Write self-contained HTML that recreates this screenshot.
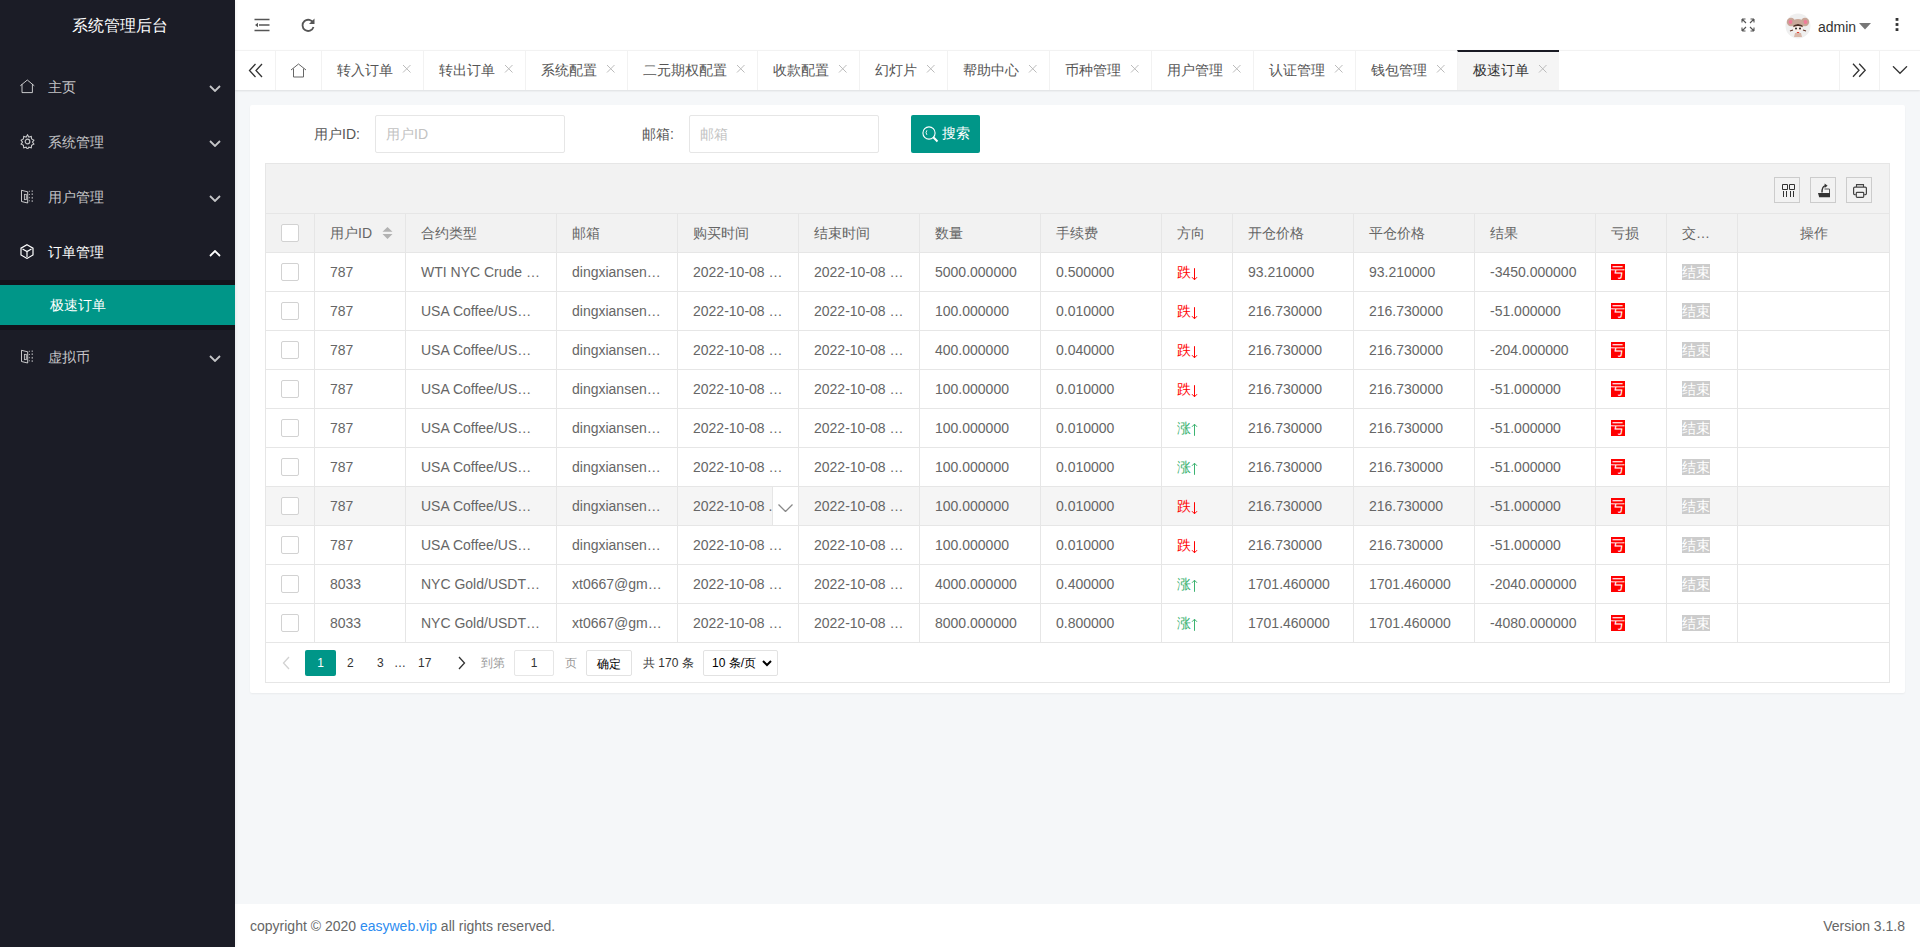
<!DOCTYPE html><html><head><meta charset="utf-8"><style>*{margin:0;padding:0;box-sizing:border-box}
html,body{width:1920px;height:947px;overflow:hidden;background:#f5f7f9;font-family:"Liberation Sans",sans-serif;font-size:14px;color:#666}
svg{display:block}
#side{position:absolute;left:0;top:0;width:235px;height:947px;background:#1b1c26;box-shadow:1px 0 3px rgba(0,0,0,.06);z-index:2}
#logo{position:absolute;left:2px;top:1px;width:235px;height:50px;line-height:50px;text-align:center;color:#fff;font-size:16px}
.nav{position:absolute;left:0;width:235px;height:55px;line-height:55px;color:rgba(255,255,255,.75);font-size:14px}
.nav.act{color:#fff}
.nav .t{position:absolute;left:48px;top:0}
.nav .ic{position:absolute;left:20px;top:19px}
.nav .ar{position:absolute;left:209px;top:25px}
#sub{position:absolute;left:0;top:280px;width:235px;height:50px;background:#13141b}
#sub .it{position:absolute;left:0;top:5px;width:235px;height:40px;line-height:40px;background:#009688;color:#fff;padding-left:50px}
#head{position:absolute;left:235px;top:0;width:1685px;height:50px;background:#fff}
.hic{position:absolute}
.avatar{position:absolute;left:1550px;top:13px;width:26px;height:26px}
.admin{position:absolute;left:1583px;top:2px;line-height:50px;color:#333;font-size:14px}
#tabs{position:absolute;left:235px;top:50px;width:1685px;height:40px;background:#fff;border-top:1px solid #f2f2f2;box-shadow:0 1px 2px rgba(0,0,0,.1)}
.tbtn{position:absolute;top:-1px;height:40px;display:flex;align-items:center;justify-content:center}
.tab{position:absolute;top:-1px;height:40px;border-left:1px solid #f2f2f2;color:#555;font-size:14px}
.tab.home{display:flex;align-items:center;justify-content:center}
.tab .tt{position:absolute;left:15px;top:0;line-height:40px;white-space:nowrap}
.tab .x{position:absolute;right:12px;top:14px}
.tab.act{background:#f5f5f5;color:#333;border-top:2px solid #191a23}
.tab.act .tt{top:-2px}
.tab.act .x{top:12px}
#card{position:absolute;left:250px;top:105px;width:1655px;height:588px;background:#fff;border-radius:2px;box-shadow:0 1px 2px rgba(0,0,0,.05)}
.lbl{position:absolute;line-height:38px;color:#555;font-size:14px}
.inp{position:absolute;top:10px;width:190px;height:38px;border:1px solid #e6e6e6;border-radius:2px;padding-left:10px;line-height:36px;color:#c2c2c2}
.btn{position:absolute;left:661px;top:10px;width:69px;height:38px;background:#009688;border-radius:2px;color:#fff;display:flex;align-items:center;padding-left:11px}
.btn span{margin-left:3px}
#tbl{position:absolute;left:265px;top:163px;width:1625px;height:520px;border:1px solid #e6e6e6;background:#fff}
#tool{position:absolute;left:0;top:0;width:1623px;height:50px;background:#f2f2f2;border-bottom:1px solid #e6e6e6}
.tool{position:absolute;top:13px;margin-left:-1px;width:26px;height:26px;border:1px solid #ccc}
.hrow{position:absolute;left:0;top:50px;width:1623px;height:39px;background:#f2f2f2;border-bottom:1px solid #e6e6e6}
.row{position:absolute;left:0;width:1623px;height:39px;border-bottom:1px solid #e6e6e6;background:#fff}
.row.hov{background:#f5f5f5}
.c{position:absolute;top:0;height:38px;line-height:38px;padding-left:15px;border-left:1px solid #e6e6e6;white-space:nowrap;overflow:hidden;color:#666}
.hrow .c{height:38px;line-height:38px}
.c:first-child{border-left:none}
.c.ctr{text-align:center;padding-left:0}
.cb{position:absolute;left:16px;top:10px;width:18px;height:18px;border:1px solid #d2d2d2;border-radius:2px;background:#fff}
.sort{position:absolute;left:67px;top:12px}
.dn{color:#f00}
.arr{position:absolute;left:29px;top:14px}
.up{color:#3cb371}
.kui{display:inline-block;background:#f00;color:#fff;font-size:14px;line-height:16px;vertical-align:middle;position:relative;top:-1px}
.end{display:inline-block;background:#ccc;color:#fff;font-size:14px;line-height:16px;vertical-align:middle;position:relative;top:-1px}
.tips{position:absolute;top:0;width:26px;height:38px;background:#fff;border-left:1px solid #e6e6e6}
#page{position:absolute;left:0;top:479px;width:1623px;height:40px}
.pg{position:absolute;top:7px;height:26px;line-height:26px;color:#333;font-size:12px}
.pg.prev{left:16px;top:13px}
.pg.cur{left:39px;width:31px;background:#009688;color:#fff;text-align:center;border-radius:2px}
.pg.next{left:192px;top:13px}
.ptxt{position:absolute;top:7px;line-height:26px;font-size:12px}
.pinp{position:absolute;left:248px;top:7px;width:40px;height:26px;border:1px solid #e6e6e6;border-radius:2px;text-align:center;line-height:24px;font-size:12px;color:#333}
.pbtn{position:absolute;left:320px;top:7px;width:46px;height:26px;border:1px solid #e2e2e2;border-radius:2px;text-align:center;line-height:26px;font-size:12px;color:#000}
.psel{position:absolute;left:437px;top:7px;width:75px;height:26px;border:1px solid #e2e2e2;border-radius:2px;line-height:24px;font-size:12px;color:#000;padding-left:8px}
.psel .chev{position:absolute;right:5px;top:9px}
#foot{position:absolute;left:235px;top:904px;width:1685px;height:43px;background:#fff;line-height:45px;font-size:14px;color:#666;padding-left:15px}
#foot .lnk{color:#2d8cf0}
#foot .v{position:absolute;right:15px;top:0;line-height:45px}
</style></head><body>
<div id="side"><div id="logo">系统管理后台</div>
<div class="nav" style="top:60px"><span class="ic ic-home"><svg width="15" height="15" viewBox="0 0 15 15" ><path d="M0.3 6.8L7.3 1 14.3 6.8M2 5.3v8.3h10.4V5.3" fill="none" stroke="currentColor" stroke-width="1"/></svg></span><span class="t">主页</span><span class="ar"><svg width="12" height="7" viewBox="0 0 12 7" ><path d="M1 1l5 5 5-5" fill="none" stroke="currentColor" stroke-width="1.8"/></svg></span></div>
<div class="nav" style="top:115px"><span class="ic ic-gear"><svg width="15" height="15" viewBox="0 0 15 15" ><circle cx="7.5" cy="7.5" r="2.3" fill="none" stroke="currentColor" stroke-width="1.2"/><path d="M7.5 0.8l1.3 2.2 2.5-.6.3 2.5 2.3 1.2-1.4 2 1.4 2-2.3 1.2-.3 2.5-2.5-.6-1.3 2.2-1.3-2.2-2.5.6-.3-2.5-2.3-1.2 1.4-2-1.4-2 2.3-1.2.3-2.5 2.5.6z" fill="none" stroke="currentColor" stroke-width="1.1"/></svg></span><span class="t">系统管理</span><span class="ar"><svg width="12" height="7" viewBox="0 0 12 7" ><path d="M1 1l5 5 5-5" fill="none" stroke="currentColor" stroke-width="1.8"/></svg></span></div>
<div class="nav" style="top:170px"><span class="ic ic-book"><svg width="15" height="15" viewBox="0 0 15 15" ><path d="M1.5 1.3L7.7 2.8V14L1.5 12.5z" fill="none" stroke="currentColor" stroke-width="1"/><rect x="4.4" y="5.4" width="1.9" height="5.2" fill="none" stroke="currentColor" stroke-width="0.9"/><path d="M9.3 1.8v1M9.3 5v1M9.3 8.2v1M9.3 11.3v1M12.2 1.5v1.4M12.2 4.4v1.6M12.2 7.9v1.8M12.2 11.3v1.6" stroke="currentColor" stroke-width="1"/></svg></span><span class="t">用户管理</span><span class="ar"><svg width="12" height="7" viewBox="0 0 12 7" ><path d="M1 1l5 5 5-5" fill="none" stroke="currentColor" stroke-width="1.8"/></svg></span></div>
<div class="nav act" style="top:225px"><span class="ic ic-cube"><svg width="15" height="15" viewBox="0 0 15 15" ><path d="M7 0.8l6 3.4v6.8l-6 3.4-6-3.4V4.2z M2.5 5l4.5 2.6 4.5-2.6 M7 7.6v5.4" fill="none" stroke="currentColor" stroke-width="1.2"/></svg></span><span class="t">订单管理</span><span class="ar"><svg width="12" height="7" viewBox="0 0 12 7" ><path d="M1 6l5-5 5 5" fill="none" stroke="currentColor" stroke-width="1.8"/></svg></span></div>
<div class="nav" style="top:330px"><span class="ic ic-book"><svg width="15" height="15" viewBox="0 0 15 15" ><path d="M1.5 1.3L7.7 2.8V14L1.5 12.5z" fill="none" stroke="currentColor" stroke-width="1"/><rect x="4.4" y="5.4" width="1.9" height="5.2" fill="none" stroke="currentColor" stroke-width="0.9"/><path d="M9.3 1.8v1M9.3 5v1M9.3 8.2v1M9.3 11.3v1M12.2 1.5v1.4M12.2 4.4v1.6M12.2 7.9v1.8M12.2 11.3v1.6" stroke="currentColor" stroke-width="1"/></svg></span><span class="t">虚拟币</span><span class="ar"><svg width="12" height="7" viewBox="0 0 12 7" ><path d="M1 1l5 5 5-5" fill="none" stroke="currentColor" stroke-width="1.8"/></svg></span></div>
<div id="sub"><div class="it">极速订单</div></div>
</div>
<div id="head">
<span class="hic" style="left:19px;top:18px"><svg width="16" height="14" viewBox="0 0 16 14" ><path d="M0.5 1.5h15M5 7h10.5M0.5 12.5h15" stroke="#555" stroke-width="1.5"/><path d="M1 7l3-2.2v4.4z" fill="#555"/></svg></span>
<span class="hic" style="left:65px;top:17px"><svg width="16" height="16" viewBox="0 0 16 16" ><path d="M13.3 6.2A5.6 5.6 0 1 0 13.5 10" fill="none" stroke="#555" stroke-width="1.8"/><path d="M14.5 1.5v5.5H9z" fill="#555"/></svg></span>
<span class="hic" style="left:1506px;top:18px"><svg width="14" height="14" viewBox="0 0 14 14" ><path d="M1 1l4 4M1 1v3.5M1 1h3.5 M13 1l-4 4M13 1v3.5M13 1H9.5 M1 13l4-4M1 13V9.5M1 13h3.5 M13 13l-4-4M13 13V9.5M13 13H9.5" fill="none" stroke="#555" stroke-width="1.1"/></svg></span>
<span class="avatar"><svg width="26" height="26" viewBox="0 0 26 26" ><circle cx="13" cy="13" r="12.5" fill="#efefef"/><circle cx="6" cy="9" r="4.2" fill="#c8a597"/><circle cx="20" cy="9" r="4.2" fill="#c8a597"/><circle cx="5.6" cy="9" r="2" fill="#f07a9a"/><circle cx="20.4" cy="9" r="2" fill="#f07a9a"/><ellipse cx="13" cy="11" rx="6" ry="5" fill="#c9a89a"/><ellipse cx="13" cy="15" rx="4.5" ry="4" fill="#fbeee8"/><path d="M8.5 12.5q4.5-3 9 0v1.5q-4.5-2-9 0z" fill="#4a2c22"/><circle cx="11" cy="15.5" r="1" fill="#222"/><circle cx="15" cy="15.5" r="1" fill="#222"/><path d="M11.5 19l1.5 2 1.5-2z" fill="#e83a2a"/><path d="M5 18l3-1M21 18l-3-1" stroke="#6a3a2a" stroke-width="1.3"/><path d="M10 20h6l1 4H9z" fill="#d9b8aa"/></svg></span><span class="admin">admin</span>
<span class="hic" style="left:1624px;top:23px"><svg width="12" height="7" viewBox="0 0 12 7" ><path d="M0 0h12L6 6.5z" fill="#777"/></svg></span>
<span class="hic" style="left:1660px;top:17px"><svg width="4" height="15" viewBox="0 0 4 15" ><rect x="0.6" y="1" width="2.8" height="2.8" fill="#333"/><rect x="0.6" y="6.1" width="2.8" height="2.8" fill="#333"/><rect x="0.6" y="11.2" width="2.8" height="2.8" fill="#333"/></svg></span>
</div>
<div id="tabs">
<span class="tbtn" style="left:0;width:40px"><svg width="15" height="15" viewBox="0 0 15 15" ><path d="M7.5 1L1.5 7.5l6 6.5M14 1L8 7.5l6 6.5" fill="none" stroke="#333" stroke-width="1.3"/></svg></span>
<span class="tab home" style="left:40px;width:46px"><svg width="17" height="15" viewBox="0 0 17 15" ><path d="M1 7L8.5 1 16 7M3.5 5.5v8.5h10V5.5" fill="none" stroke="#666" stroke-width="1"/></svg></span>
<span class="tab" style="left:86px;width:102px"><span class="tt">转入订单</span><span class="x"><svg width="9" height="9" viewBox="0 0 9 9" ><path d="M1 1l7.5 7.5M8.5 1L1 8.5" stroke="#bbb" stroke-width="1"/></svg></span></span>
<span class="tab" style="left:188px;width:102px"><span class="tt">转出订单</span><span class="x"><svg width="9" height="9" viewBox="0 0 9 9" ><path d="M1 1l7.5 7.5M8.5 1L1 8.5" stroke="#bbb" stroke-width="1"/></svg></span></span>
<span class="tab" style="left:290px;width:102px"><span class="tt">系统配置</span><span class="x"><svg width="9" height="9" viewBox="0 0 9 9" ><path d="M1 1l7.5 7.5M8.5 1L1 8.5" stroke="#bbb" stroke-width="1"/></svg></span></span>
<span class="tab" style="left:392px;width:130px"><span class="tt">二元期权配置</span><span class="x"><svg width="9" height="9" viewBox="0 0 9 9" ><path d="M1 1l7.5 7.5M8.5 1L1 8.5" stroke="#bbb" stroke-width="1"/></svg></span></span>
<span class="tab" style="left:522px;width:102px"><span class="tt">收款配置</span><span class="x"><svg width="9" height="9" viewBox="0 0 9 9" ><path d="M1 1l7.5 7.5M8.5 1L1 8.5" stroke="#bbb" stroke-width="1"/></svg></span></span>
<span class="tab" style="left:624px;width:88px"><span class="tt">幻灯片</span><span class="x"><svg width="9" height="9" viewBox="0 0 9 9" ><path d="M1 1l7.5 7.5M8.5 1L1 8.5" stroke="#bbb" stroke-width="1"/></svg></span></span>
<span class="tab" style="left:712px;width:102px"><span class="tt">帮助中心</span><span class="x"><svg width="9" height="9" viewBox="0 0 9 9" ><path d="M1 1l7.5 7.5M8.5 1L1 8.5" stroke="#bbb" stroke-width="1"/></svg></span></span>
<span class="tab" style="left:814px;width:102px"><span class="tt">币种管理</span><span class="x"><svg width="9" height="9" viewBox="0 0 9 9" ><path d="M1 1l7.5 7.5M8.5 1L1 8.5" stroke="#bbb" stroke-width="1"/></svg></span></span>
<span class="tab" style="left:916px;width:102px"><span class="tt">用户管理</span><span class="x"><svg width="9" height="9" viewBox="0 0 9 9" ><path d="M1 1l7.5 7.5M8.5 1L1 8.5" stroke="#bbb" stroke-width="1"/></svg></span></span>
<span class="tab" style="left:1018px;width:102px"><span class="tt">认证管理</span><span class="x"><svg width="9" height="9" viewBox="0 0 9 9" ><path d="M1 1l7.5 7.5M8.5 1L1 8.5" stroke="#bbb" stroke-width="1"/></svg></span></span>
<span class="tab" style="left:1120px;width:102px"><span class="tt">钱包管理</span><span class="x"><svg width="9" height="9" viewBox="0 0 9 9" ><path d="M1 1l7.5 7.5M8.5 1L1 8.5" stroke="#bbb" stroke-width="1"/></svg></span></span>
<span class="tab act" style="left:1222px;width:102px"><span class="tt">极速订单</span><span class="x"><svg width="9" height="9" viewBox="0 0 9 9" ><path d="M1 1l7.5 7.5M8.5 1L1 8.5" stroke="#bbb" stroke-width="1"/></svg></span></span>
<span class="tbtn" style="left:1604px;width:40px;border-left:1px solid #f2f2f2"><svg width="15" height="15" viewBox="0 0 15 15" ><path d="M1 0.8l6 6.5-6 6.5M7.2 0.8l6 6.5-6 6.5" fill="none" stroke="#333" stroke-width="1.3"/></svg></span>
<span class="tbtn" style="left:1644px;width:41px;border-left:1px solid #f2f2f2"><svg width="16" height="9" viewBox="0 0 16 9" ><path d="M1 0.3l7 7 7-7" fill="none" stroke="#333" stroke-width="1.3"/></svg></span>
</div>
<div id="card">
<div class="lbl" style="left:64px;top:10px">用户ID:</div><div class="inp" style="left:125px">用户ID</div>
<div class="lbl" style="left:392px;top:10px">邮箱:</div><div class="inp" style="left:439px">邮箱</div>
<div class="btn"><svg width="17" height="17" viewBox="0 0 17 17" ><circle cx="7" cy="7" r="6.1" fill="none" stroke="#fff" stroke-width="1.1"/><path d="M11.3 11.3l4.2 4.2" stroke="#fff" stroke-width="2"/><path d="M4.9 4.3Q3.2 6.6 4.9 8.9" fill="none" stroke="#fff" stroke-width="0.9"/></svg><span>搜索</span></div>
</div>
<div id="tbl">
<div id="tool">
<span class="tool" style="left:1509px"><svg width="24" height="24" viewBox="0 0 24 24" ><path d="M7.5 6.5h5v5h-5z M14.5 6.5h5v5h-5z" fill="none" stroke="#333" stroke-width="1"/><path d="M8.5 13v6M11.5 13v6M15.5 13v6M18.5 13v6" stroke="#333" stroke-width="1"/></svg></span>
<span class="tool" style="left:1545px"><svg width="24" height="24" viewBox="0 0 24 24" ><path d="M7 15h12v4.2H8.2z" fill="#333"/><path d="M13.5 11h5v4" fill="none" stroke="#555" stroke-width="1"/><path d="M11 14.5C11 10.5 12 8.3 14 7.9" fill="none" stroke="#333" stroke-width="1.4"/><path d="M13.6 5.6l3 2.2-3 2.2z" fill="#333"/></svg></span>
<span class="tool" style="left:1581px"><svg width="24" height="24" viewBox="0 0 24 24" ><path d="M9.5 9V6.6h7V9" fill="none" stroke="#444" stroke-width="1.1"/><path d="M8.7 16.6H7.6a1 1 0 0 1-1-1V10.3a1.2 1.2 0 0 1 1.2-1.2h10.4a1.2 1.2 0 0 1 1.2 1.2v5.3a1 1 0 0 1-1 1h-1.1" fill="none" stroke="#444" stroke-width="1.2"/><rect x="9.3" y="14.3" width="7.4" height="5" rx="0.8" fill="none" stroke="#444" stroke-width="1.2"/></svg></span>
</div>
<div class="hrow">
<span class="c" style="left:-1px;width:49px"><i class="cb"></i></span>
<span class="c" style="left:48px;width:91px">用户ID<span class="sort"><svg width="11" height="14" viewBox="0 0 11 14" ><path d="M5.5 0.9l5 4.9h-10z M5.5 12.9l5-4.9h-10z" fill="#b2b2b2"/></svg></span></span>
<span class="c" style="left:139px;width:151px">合约类型</span>
<span class="c" style="left:290px;width:121px">邮箱</span>
<span class="c" style="left:411px;width:121px">购买时间</span>
<span class="c" style="left:532px;width:121px">结束时间</span>
<span class="c" style="left:653px;width:121px">数量</span>
<span class="c" style="left:774px;width:121px">手续费</span>
<span class="c" style="left:895px;width:71px">方向</span>
<span class="c" style="left:966px;width:121px">开仓价格</span>
<span class="c" style="left:1087px;width:121px">平仓价格</span>
<span class="c" style="left:1208px;width:121px">结果</span>
<span class="c" style="left:1329px;width:71px">亏损</span>
<span class="c" style="left:1400px;width:71px">交…</span>
<span class="c ctr" style="left:1471px;width:152px">操作</span>
</div>
<div class="row" style="top:89px">
<span class="c" style="left:-1px;width:49px"><i class="cb"></i></span>
<span class="c" style="left:48px;width:91px">787</span>
<span class="c" style="left:139px;width:151px">WTI NYC Crude …</span>
<span class="c" style="left:290px;width:121px">dingxiansen…</span>
<span class="c" style="left:411px;width:121px">2022-10-08 …</span>
<span class="c" style="left:532px;width:121px">2022-10-08 …</span>
<span class="c" style="left:653px;width:121px">5000.000000</span>
<span class="c" style="left:774px;width:121px">0.500000</span>
<span class="c" style="left:895px;width:71px"><span class="dn">跌</span><span class="arr"><svg width="7" height="14" viewBox="0 0 7 14" ><path d="M3.5 1.2v11.5M1 10.2l2.5 2.6 2.5-2.6" fill="none" stroke="#f00" stroke-width="1"/></svg></span></span>
<span class="c" style="left:966px;width:121px">93.210000</span>
<span class="c" style="left:1087px;width:121px">93.210000</span>
<span class="c" style="left:1208px;width:121px">-3450.000000</span>
<span class="c" style="left:1329px;width:71px"><span class="kui">亏</span></span>
<span class="c" style="left:1400px;width:71px"><span class="end">结束</span></span>
<span class="c" style="left:1471px;width:152px"></span>
</div>
<div class="row" style="top:128px">
<span class="c" style="left:-1px;width:49px"><i class="cb"></i></span>
<span class="c" style="left:48px;width:91px">787</span>
<span class="c" style="left:139px;width:151px">USA Coffee/US…</span>
<span class="c" style="left:290px;width:121px">dingxiansen…</span>
<span class="c" style="left:411px;width:121px">2022-10-08 …</span>
<span class="c" style="left:532px;width:121px">2022-10-08 …</span>
<span class="c" style="left:653px;width:121px">100.000000</span>
<span class="c" style="left:774px;width:121px">0.010000</span>
<span class="c" style="left:895px;width:71px"><span class="dn">跌</span><span class="arr"><svg width="7" height="14" viewBox="0 0 7 14" ><path d="M3.5 1.2v11.5M1 10.2l2.5 2.6 2.5-2.6" fill="none" stroke="#f00" stroke-width="1"/></svg></span></span>
<span class="c" style="left:966px;width:121px">216.730000</span>
<span class="c" style="left:1087px;width:121px">216.730000</span>
<span class="c" style="left:1208px;width:121px">-51.000000</span>
<span class="c" style="left:1329px;width:71px"><span class="kui">亏</span></span>
<span class="c" style="left:1400px;width:71px"><span class="end">结束</span></span>
<span class="c" style="left:1471px;width:152px"></span>
</div>
<div class="row" style="top:167px">
<span class="c" style="left:-1px;width:49px"><i class="cb"></i></span>
<span class="c" style="left:48px;width:91px">787</span>
<span class="c" style="left:139px;width:151px">USA Coffee/US…</span>
<span class="c" style="left:290px;width:121px">dingxiansen…</span>
<span class="c" style="left:411px;width:121px">2022-10-08 …</span>
<span class="c" style="left:532px;width:121px">2022-10-08 …</span>
<span class="c" style="left:653px;width:121px">400.000000</span>
<span class="c" style="left:774px;width:121px">0.040000</span>
<span class="c" style="left:895px;width:71px"><span class="dn">跌</span><span class="arr"><svg width="7" height="14" viewBox="0 0 7 14" ><path d="M3.5 1.2v11.5M1 10.2l2.5 2.6 2.5-2.6" fill="none" stroke="#f00" stroke-width="1"/></svg></span></span>
<span class="c" style="left:966px;width:121px">216.730000</span>
<span class="c" style="left:1087px;width:121px">216.730000</span>
<span class="c" style="left:1208px;width:121px">-204.000000</span>
<span class="c" style="left:1329px;width:71px"><span class="kui">亏</span></span>
<span class="c" style="left:1400px;width:71px"><span class="end">结束</span></span>
<span class="c" style="left:1471px;width:152px"></span>
</div>
<div class="row" style="top:206px">
<span class="c" style="left:-1px;width:49px"><i class="cb"></i></span>
<span class="c" style="left:48px;width:91px">787</span>
<span class="c" style="left:139px;width:151px">USA Coffee/US…</span>
<span class="c" style="left:290px;width:121px">dingxiansen…</span>
<span class="c" style="left:411px;width:121px">2022-10-08 …</span>
<span class="c" style="left:532px;width:121px">2022-10-08 …</span>
<span class="c" style="left:653px;width:121px">100.000000</span>
<span class="c" style="left:774px;width:121px">0.010000</span>
<span class="c" style="left:895px;width:71px"><span class="dn">跌</span><span class="arr"><svg width="7" height="14" viewBox="0 0 7 14" ><path d="M3.5 1.2v11.5M1 10.2l2.5 2.6 2.5-2.6" fill="none" stroke="#f00" stroke-width="1"/></svg></span></span>
<span class="c" style="left:966px;width:121px">216.730000</span>
<span class="c" style="left:1087px;width:121px">216.730000</span>
<span class="c" style="left:1208px;width:121px">-51.000000</span>
<span class="c" style="left:1329px;width:71px"><span class="kui">亏</span></span>
<span class="c" style="left:1400px;width:71px"><span class="end">结束</span></span>
<span class="c" style="left:1471px;width:152px"></span>
</div>
<div class="row" style="top:245px">
<span class="c" style="left:-1px;width:49px"><i class="cb"></i></span>
<span class="c" style="left:48px;width:91px">787</span>
<span class="c" style="left:139px;width:151px">USA Coffee/US…</span>
<span class="c" style="left:290px;width:121px">dingxiansen…</span>
<span class="c" style="left:411px;width:121px">2022-10-08 …</span>
<span class="c" style="left:532px;width:121px">2022-10-08 …</span>
<span class="c" style="left:653px;width:121px">100.000000</span>
<span class="c" style="left:774px;width:121px">0.010000</span>
<span class="c" style="left:895px;width:71px"><span class="up">涨</span><span class="arr"><svg width="7" height="14" viewBox="0 0 7 14" ><path d="M3.5 12.8V1.3M1 3.8l2.5-2.6 2.5 2.6" fill="none" stroke="#3cb371" stroke-width="1"/></svg></span></span>
<span class="c" style="left:966px;width:121px">216.730000</span>
<span class="c" style="left:1087px;width:121px">216.730000</span>
<span class="c" style="left:1208px;width:121px">-51.000000</span>
<span class="c" style="left:1329px;width:71px"><span class="kui">亏</span></span>
<span class="c" style="left:1400px;width:71px"><span class="end">结束</span></span>
<span class="c" style="left:1471px;width:152px"></span>
</div>
<div class="row" style="top:284px">
<span class="c" style="left:-1px;width:49px"><i class="cb"></i></span>
<span class="c" style="left:48px;width:91px">787</span>
<span class="c" style="left:139px;width:151px">USA Coffee/US…</span>
<span class="c" style="left:290px;width:121px">dingxiansen…</span>
<span class="c" style="left:411px;width:121px">2022-10-08 …</span>
<span class="c" style="left:532px;width:121px">2022-10-08 …</span>
<span class="c" style="left:653px;width:121px">100.000000</span>
<span class="c" style="left:774px;width:121px">0.010000</span>
<span class="c" style="left:895px;width:71px"><span class="up">涨</span><span class="arr"><svg width="7" height="14" viewBox="0 0 7 14" ><path d="M3.5 12.8V1.3M1 3.8l2.5-2.6 2.5 2.6" fill="none" stroke="#3cb371" stroke-width="1"/></svg></span></span>
<span class="c" style="left:966px;width:121px">216.730000</span>
<span class="c" style="left:1087px;width:121px">216.730000</span>
<span class="c" style="left:1208px;width:121px">-51.000000</span>
<span class="c" style="left:1329px;width:71px"><span class="kui">亏</span></span>
<span class="c" style="left:1400px;width:71px"><span class="end">结束</span></span>
<span class="c" style="left:1471px;width:152px"></span>
</div>
<div class="row hov" style="top:323px">
<span class="c" style="left:-1px;width:49px"><i class="cb"></i></span>
<span class="c" style="left:48px;width:91px">787</span>
<span class="c" style="left:139px;width:151px">USA Coffee/US…</span>
<span class="c" style="left:290px;width:121px">dingxiansen…</span>
<span class="c" style="left:411px;width:121px">2022-10-08 .</span>
<span class="c" style="left:532px;width:121px">2022-10-08 …</span>
<span class="c" style="left:653px;width:121px">100.000000</span>
<span class="c" style="left:774px;width:121px">0.010000</span>
<span class="c" style="left:895px;width:71px"><span class="dn">跌</span><span class="arr"><svg width="7" height="14" viewBox="0 0 7 14" ><path d="M3.5 1.2v11.5M1 10.2l2.5 2.6 2.5-2.6" fill="none" stroke="#f00" stroke-width="1"/></svg></span></span>
<span class="c" style="left:966px;width:121px">216.730000</span>
<span class="c" style="left:1087px;width:121px">216.730000</span>
<span class="c" style="left:1208px;width:121px">-51.000000</span>
<span class="c" style="left:1329px;width:71px"><span class="kui">亏</span></span>
<span class="c" style="left:1400px;width:71px"><span class="end">结束</span></span>
<span class="c" style="left:1471px;width:152px"></span>
<span class="tips" style="left:506px"><span style="position:absolute;left:5px;top:17px"><svg width="15" height="8" viewBox="0 0 15 8" ><path d="M0.5 0.5l7 7 7-7" fill="none" stroke="#888" stroke-width="1.3"/></svg></span></span>
</div>
<div class="row" style="top:362px">
<span class="c" style="left:-1px;width:49px"><i class="cb"></i></span>
<span class="c" style="left:48px;width:91px">787</span>
<span class="c" style="left:139px;width:151px">USA Coffee/US…</span>
<span class="c" style="left:290px;width:121px">dingxiansen…</span>
<span class="c" style="left:411px;width:121px">2022-10-08 …</span>
<span class="c" style="left:532px;width:121px">2022-10-08 …</span>
<span class="c" style="left:653px;width:121px">100.000000</span>
<span class="c" style="left:774px;width:121px">0.010000</span>
<span class="c" style="left:895px;width:71px"><span class="dn">跌</span><span class="arr"><svg width="7" height="14" viewBox="0 0 7 14" ><path d="M3.5 1.2v11.5M1 10.2l2.5 2.6 2.5-2.6" fill="none" stroke="#f00" stroke-width="1"/></svg></span></span>
<span class="c" style="left:966px;width:121px">216.730000</span>
<span class="c" style="left:1087px;width:121px">216.730000</span>
<span class="c" style="left:1208px;width:121px">-51.000000</span>
<span class="c" style="left:1329px;width:71px"><span class="kui">亏</span></span>
<span class="c" style="left:1400px;width:71px"><span class="end">结束</span></span>
<span class="c" style="left:1471px;width:152px"></span>
</div>
<div class="row" style="top:401px">
<span class="c" style="left:-1px;width:49px"><i class="cb"></i></span>
<span class="c" style="left:48px;width:91px">8033</span>
<span class="c" style="left:139px;width:151px">NYC Gold/USDT…</span>
<span class="c" style="left:290px;width:121px">xt0667@gm…</span>
<span class="c" style="left:411px;width:121px">2022-10-08 …</span>
<span class="c" style="left:532px;width:121px">2022-10-08 …</span>
<span class="c" style="left:653px;width:121px">4000.000000</span>
<span class="c" style="left:774px;width:121px">0.400000</span>
<span class="c" style="left:895px;width:71px"><span class="up">涨</span><span class="arr"><svg width="7" height="14" viewBox="0 0 7 14" ><path d="M3.5 12.8V1.3M1 3.8l2.5-2.6 2.5 2.6" fill="none" stroke="#3cb371" stroke-width="1"/></svg></span></span>
<span class="c" style="left:966px;width:121px">1701.460000</span>
<span class="c" style="left:1087px;width:121px">1701.460000</span>
<span class="c" style="left:1208px;width:121px">-2040.000000</span>
<span class="c" style="left:1329px;width:71px"><span class="kui">亏</span></span>
<span class="c" style="left:1400px;width:71px"><span class="end">结束</span></span>
<span class="c" style="left:1471px;width:152px"></span>
</div>
<div class="row" style="top:440px">
<span class="c" style="left:-1px;width:49px"><i class="cb"></i></span>
<span class="c" style="left:48px;width:91px">8033</span>
<span class="c" style="left:139px;width:151px">NYC Gold/USDT…</span>
<span class="c" style="left:290px;width:121px">xt0667@gm…</span>
<span class="c" style="left:411px;width:121px">2022-10-08 …</span>
<span class="c" style="left:532px;width:121px">2022-10-08 …</span>
<span class="c" style="left:653px;width:121px">8000.000000</span>
<span class="c" style="left:774px;width:121px">0.800000</span>
<span class="c" style="left:895px;width:71px"><span class="up">涨</span><span class="arr"><svg width="7" height="14" viewBox="0 0 7 14" ><path d="M3.5 12.8V1.3M1 3.8l2.5-2.6 2.5 2.6" fill="none" stroke="#3cb371" stroke-width="1"/></svg></span></span>
<span class="c" style="left:966px;width:121px">1701.460000</span>
<span class="c" style="left:1087px;width:121px">1701.460000</span>
<span class="c" style="left:1208px;width:121px">-4080.000000</span>
<span class="c" style="left:1329px;width:71px"><span class="kui">亏</span></span>
<span class="c" style="left:1400px;width:71px"><span class="end">结束</span></span>
<span class="c" style="left:1471px;width:152px"></span>
</div>
<div id="page">
<span class="pg prev"><svg width="8" height="14" viewBox="0 0 8 14" ><path d="M7 1L1.5 7 7 13" fill="none" stroke="#d2d2d2" stroke-width="1.3"/></svg></span>
<span class="pg cur">1</span><span class="pg n" style="left:81px">2</span><span class="pg n" style="left:111px">3</span><span class="pg n" style="left:128px">…</span><span class="pg n" style="left:152px">17</span>
<span class="pg next"><svg width="8" height="14" viewBox="0 0 8 14" ><path d="M1 1l5.5 6L1 13" fill="none" stroke="#333" stroke-width="1.3"/></svg></span>
<span class="ptxt" style="left:215px;color:#999">到第</span><span class="pinp">1</span><span class="ptxt" style="left:299px;color:#999">页</span><span class="pbtn">确定</span><span class="ptxt" style="left:377px;color:#333">共 170 条</span>
<span class="psel">10 条/页<span class="chev"><svg width="10" height="7" viewBox="0 0 10 7" ><path d="M1 1l4 4 4-4" fill="none" stroke="#000" stroke-width="2"/></svg></span></span>
</div>
</div>
<div id="foot">copyright © 2020 <span class="lnk">easyweb.vip</span> all rights reserved.<span class="v">Version 3.1.8</span></div>
</body></html>
